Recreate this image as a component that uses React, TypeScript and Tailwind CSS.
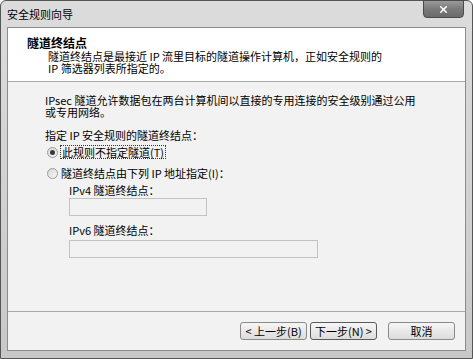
import { X } from "lucide-react"

const font = { fontFamily: '"Noto Sans CJK SC", "Liberation Sans", sans-serif' }

function Radio({ checked }: { checked?: boolean }) {
  return (
    <span className="relative flex h-[11px] w-[11px] shrink-0 items-center justify-center rounded-full border border-[#9a9a9a] bg-gradient-to-br from-[#d8d8d8] to-[#f8f8f8]">
      {checked && <span className="h-[5px] w-[5px] rounded-full bg-[#3a3a3a]" />}
    </span>
  )
}

function WizButton({ children, focused }: { children: React.ReactNode; focused?: boolean }) {
  return (
    <button
      className={
        "flex h-[18px] w-[67px] items-center justify-center rounded-[3px] border bg-gradient-to-b from-[#f6f6f6] to-[#dcdcdc] text-[11px] leading-none text-black " +
        (focused ? "border-[#5a5a5a]" : "border-[#8a8a8a]")
      }
    >
      {children}
    </button>
  )
}

export default function App() {
  return (
    <div className="h-[359px] w-[473px] bg-white" style={font}>
      {/* 窗口外框 */}
      <div className="flex h-[359px] w-[473px] flex-col rounded-t-[6px] border border-[#555] bg-gradient-to-b from-[#dcdcdc] via-[#d2d2d2] to-[#c8c8c8]">
        {/* 标题栏 */}
        <div className="relative flex h-[26px] shrink-0 items-center pl-[6px]">
          <span className="text-[11px] leading-none text-black">安全规则向导</span>
          <div className="absolute right-[8px] top-[-1px] flex h-[18px] w-[41px] items-center justify-center rounded-b-[4px] border border-[#4a4a4a] bg-gradient-to-b from-[#9a9a9a] via-[#7a7a7a] to-[#6a6a6a]">
            <X className="h-[11px] w-[11px] text-white" strokeWidth={3.5} />
          </div>
        </div>

        {/* 客户区 */}
        <div className="mx-[6px] flex h-[324px] flex-col border border-[#8c8c8c] bg-[#f2f2f2] text-[11px] text-black">
          {/* 页眉 */}
          <div className="h-[54px] shrink-0 border-b border-[#a8a8a8] bg-white pl-[19px] pt-[9px]">
            <div className="text-[12px] font-bold leading-[12px]">隧道终结点</div>
            <div className="pl-[21px] pt-[1px] leading-[12px]">
              <div>隧道终结点是最接近 IP 流里目标的隧道操作计算机，正如安全规则的</div>
              <div>IP 筛选器列表所指定的。</div>
            </div>
          </div>

          {/* 内容 */}
          <div className="flex-1 pl-[37px] pt-[12px] leading-[12px]">
            <div>IPsec 隧道允许数据包在两台计算机间以直接的专用连接的安全级别通过公用</div>
            <div>或专用网络。</div>
            <div className="mt-[11px]">指定 IP 安全规则的隧道终结点：</div>

            <div className="mt-[4px] flex flex-col gap-[7px] pl-[2px]">
              <label className="flex h-[14px] items-center gap-[2px]">
                <Radio checked />
                <span className="border border-dotted border-[#333] px-[1px] leading-[12px]">此规则不指定隧道(T)</span>
              </label>
              <label className="flex h-[14px] items-center gap-[3px]">
                <Radio />
                <span>隧道终结点由下列 IP 地址指定(I)：</span>
              </label>
            </div>

            <div className="mt-[4px] pl-[24px]">
              <div>IPv4 隧道终结点：</div>
              <div className="mt-[2px] h-[18px] w-[138px] border border-[#c2c2c2] bg-[#f2f2f2]" />
              <div className="mt-[8px]">IPv6 隧道终结点：</div>
              <div className="mt-[4px] h-[18px] w-[249px] border border-[#c2c2c2] bg-[#f2f2f2]" />
            </div>
          </div>

          {/* 按钮区 */}
          <div className="flex h-[39px] shrink-0 items-center justify-end border-t border-[#a8a8a8] pr-[10px]">
            <div className="flex gap-[3px]">
              <WizButton>&lt; 上一步(B)</WizButton>
              <WizButton focused>下一步(N) &gt;</WizButton>
            </div>
            <div className="ml-[11px]">
              <WizButton>取消</WizButton>
            </div>
          </div>
        </div>
      </div>
    </div>
  )
}
